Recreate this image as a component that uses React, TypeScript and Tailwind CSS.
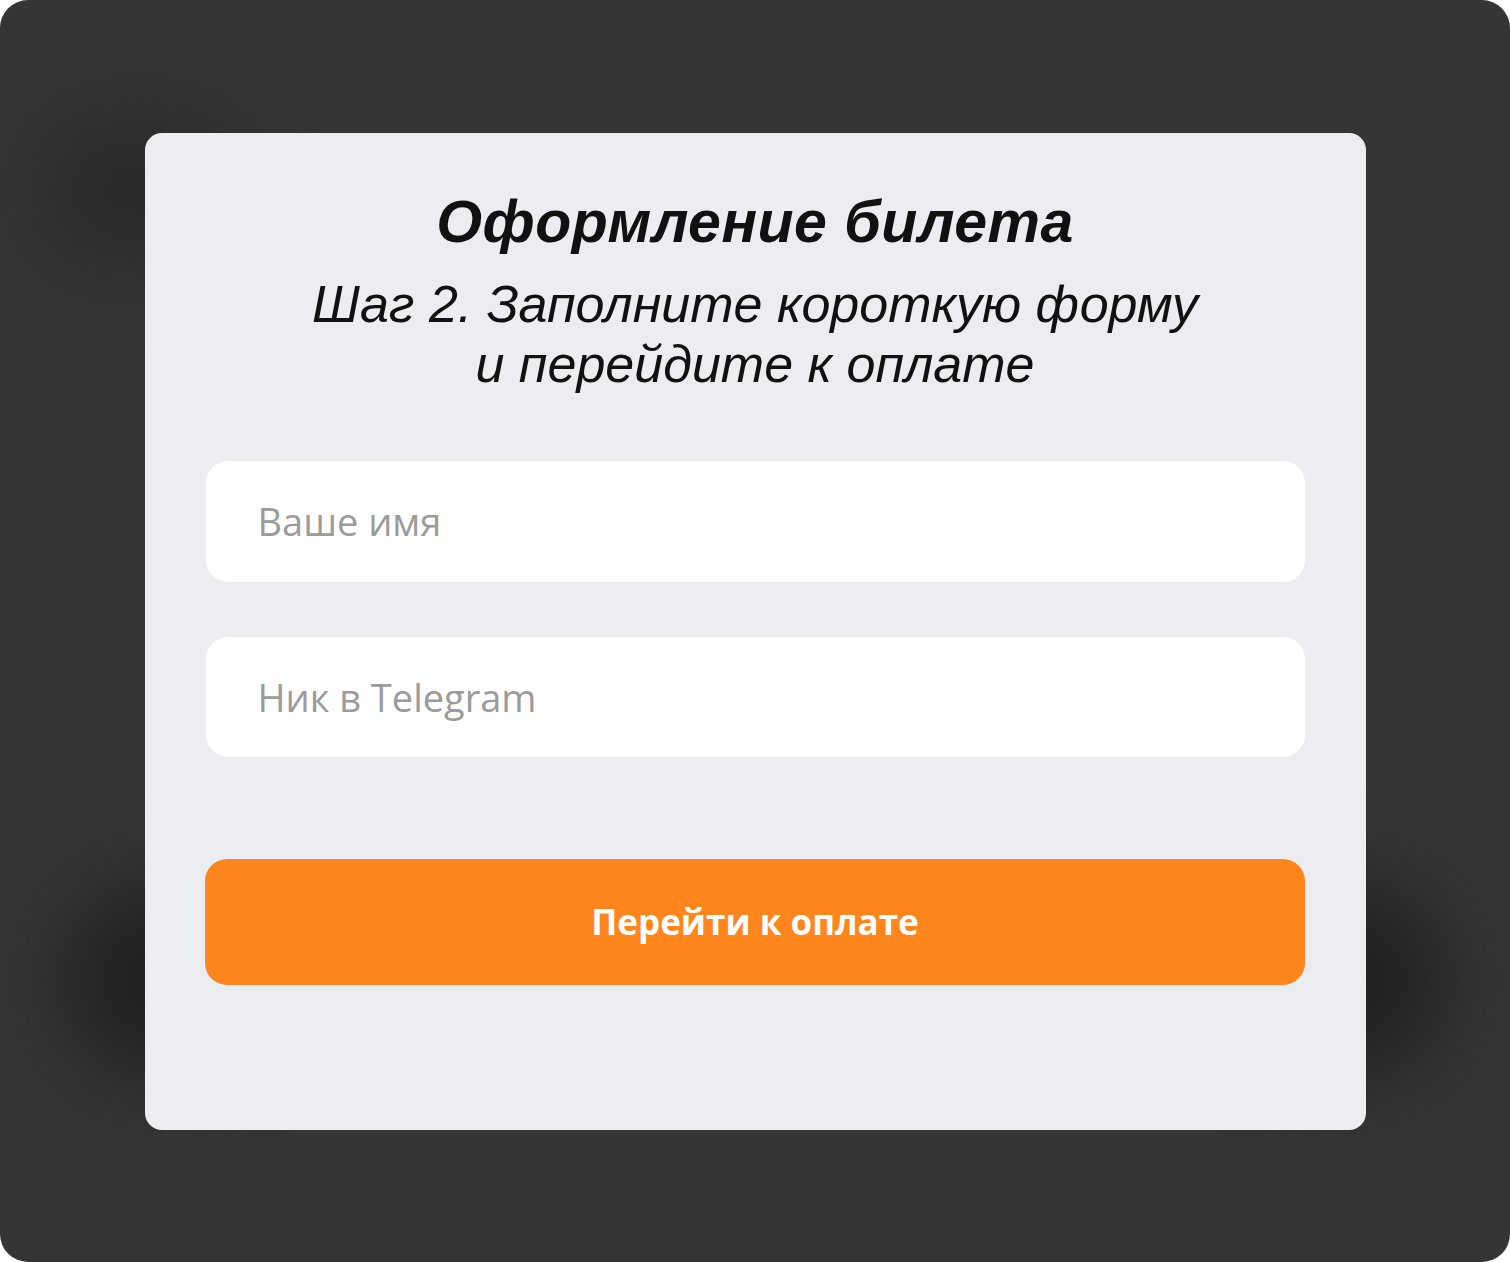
import React from "react";

export default function App() {
  return (
    <div className="w-[1510px] h-[1262px] bg-white">
      <div className="relative w-full h-full rounded-[28px] bg-[#353535] overflow-hidden flex items-start justify-center pt-[133px]">
        <div className="absolute left-[40px] top-[120px] w-[200px] h-[140px] rounded-full bg-[#2a2a2a] blur-[40px]" />
        <div className="absolute left-[60px] top-[880px] w-[200px] h-[200px] rounded-full bg-[#222222] blur-[40px]" />
        <div className="absolute right-[60px] top-[880px] w-[200px] h-[200px] rounded-full bg-[#222222] blur-[40px]" />
        <div className="relative w-[1221px] h-[997px] rounded-[17px] bg-[#ECEDF0] px-[61px] pt-[55px] flex flex-col items-center" style={{ fontFamily: '"Liberation Sans", Arial, sans-serif' }}>
          <h1 className="text-[59px] leading-[68px] font-bold italic text-[#111111] tracking-[0.5px]">Оформление билета</h1>
          <p className="mt-[18px] text-center text-[52px] leading-[60px] italic text-[#111111]">
            Шаг 2. Заполните короткую форму
            <br />
            и перейдите к оплате
          </p>
          <div className="w-full mt-[67px] flex flex-col gap-[55px]">
            <div className="h-[121px] rounded-[22px] bg-white flex items-center pl-[52px] text-[38px] text-[#9b9b9b]" style={{ fontFamily: '"Open Sans", sans-serif' }}>Ваше имя</div>
            <div className="h-[120px] rounded-[22px] bg-white flex items-center pl-[52px] text-[38px] text-[#9b9b9b]" style={{ fontFamily: '"Open Sans", sans-serif' }}>Ник в Telegram</div>
          </div>
          <button className="mt-[102px] w-[1100px] h-[126px] rounded-[22px] bg-[#FF851C] text-white text-[35px] font-bold" style={{ fontFamily: '"Open Sans", sans-serif' }}>Перейти к оплате</button>
        </div>
      </div>
    </div>
  );
}
